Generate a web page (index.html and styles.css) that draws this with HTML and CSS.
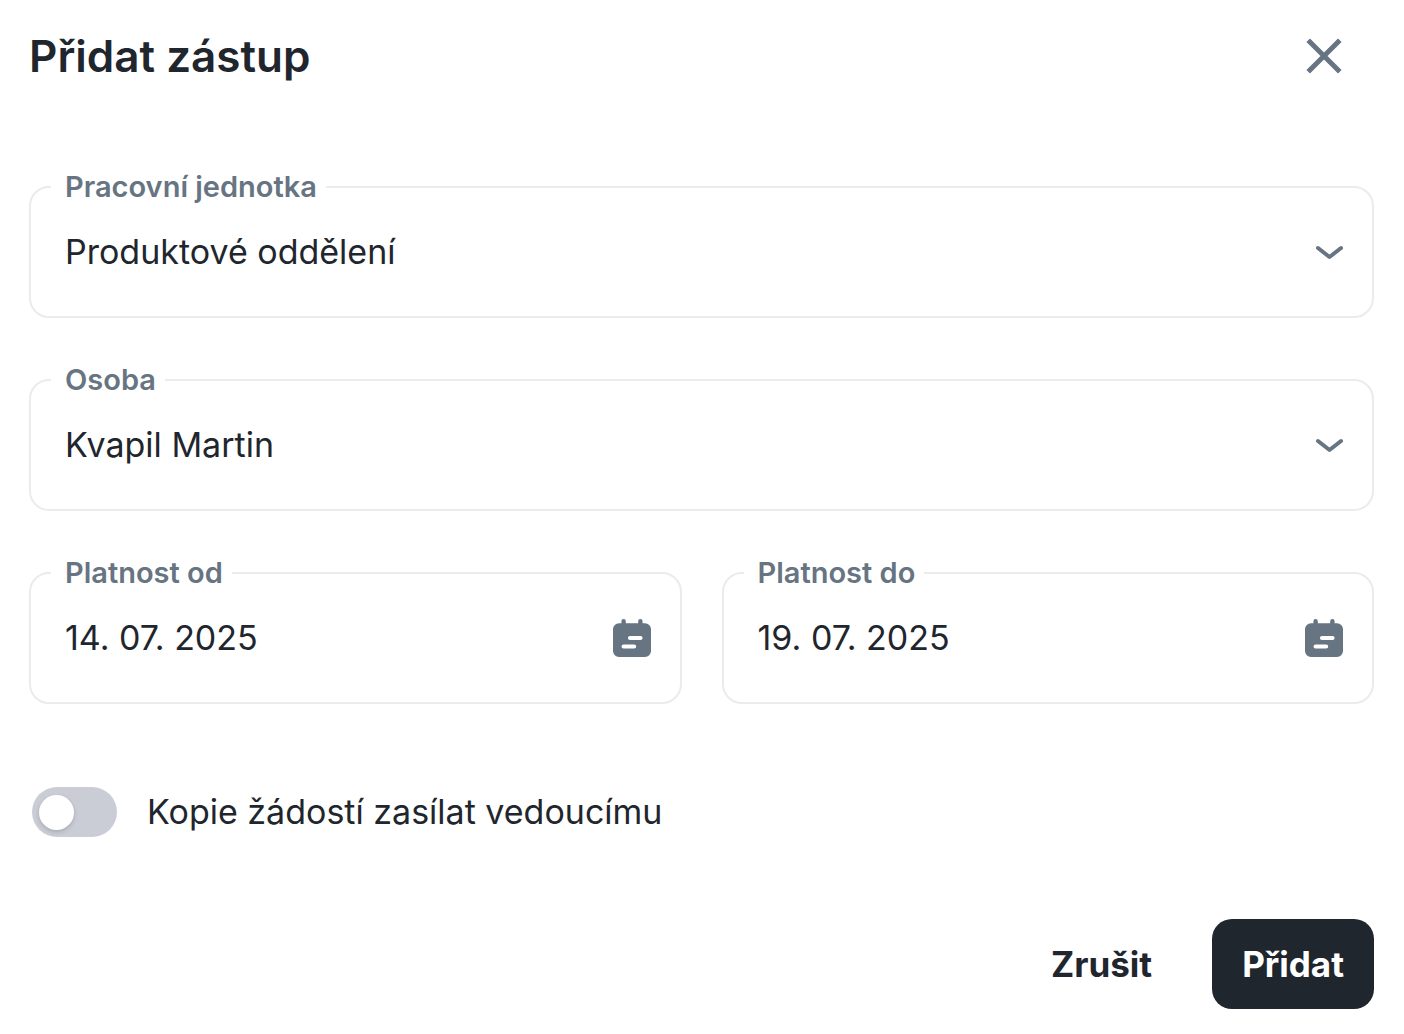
FILE: index.html
```html
<!DOCTYPE html>
<html lang="cs">
<head>
<meta charset="utf-8">
<meta name="viewport" content="width=device-width, initial-scale=1">
<title>Přidat zástup</title>
<link rel="stylesheet" href="styles.css">
</head>
<body>
<main class="dialog">
  <header class="dialog-header">
    <h1 class="dialog-title">Přidat zástup</h1>
    <button class="icon-button close-button" type="button" aria-label="Zavřít">
      <svg width="36" height="36" viewBox="0 0 36 36" fill="none" stroke="currentColor" stroke-width="5" aria-hidden="true"><path d="M2.200 2.200 33.800 33.800M33.800 2.200 2.200 33.800"/></svg>
    </button>
  </header>
  <form class="dialog-form">
    <div class="fields">
      <div class="field field-wide">
        <label class="field-label" for="unit">Pracovní jednotka</label>
        <select class="field-control" id="unit"><option>Produktové oddělení</option></select>
        <svg class="chevron" width="28" height="16" viewBox="0 0 28 16" fill="none" stroke="currentColor" stroke-width="4" stroke-linecap="round" stroke-linejoin="round" aria-hidden="true"><path d="M3 4 14.500 13 26 4"/></svg>
      </div>
      <div class="field field-wide">
        <label class="field-label" for="person">Osoba</label>
        <select class="field-control" id="person"><option>Kvapil Martin</option></select>
        <svg class="chevron" width="28" height="16" viewBox="0 0 28 16" fill="none" stroke="currentColor" stroke-width="4" stroke-linecap="round" stroke-linejoin="round" aria-hidden="true"><path d="M3 4 14.500 13 26 4"/></svg>
      </div>
      <div class="field">
        <label class="field-label" for="from">Platnost od</label>
        <input class="field-control" id="from" type="text" value="14. 07. 2025">
        <button class="icon-button" type="button" aria-label="Vybrat datum od">
          <svg width="38" height="38" viewBox="0 0 38 38" aria-hidden="true"><path fill="currentColor" d="M10.600 0a2.200 2.200 0 0 1 2.200 2.200v2h12.400v-2a2.200 2.200 0 0 1 4.400 0v2H32a6 6 0 0 1 6 6V32a6 6 0 0 1-6 6H6a6 6 0 0 1-6-6V10.200a6 6 0 0 1 6-6h2.400v-2A2.200 2.200 0 0 1 10.600 0Z"/><path stroke="#fff" stroke-width="4.200" stroke-linecap="round" d="M17 19h10.500M10.600 27.500h10.500"/></svg>
        </button>
      </div>
      <div class="field">
        <label class="field-label" for="to">Platnost do</label>
        <input class="field-control" id="to" type="text" value="19. 07. 2025">
        <button class="icon-button" type="button" aria-label="Vybrat datum do">
          <svg width="38" height="38" viewBox="0 0 38 38" aria-hidden="true"><path fill="currentColor" d="M10.600 0a2.200 2.200 0 0 1 2.200 2.200v2h12.400v-2a2.200 2.200 0 0 1 4.400 0v2H32a6 6 0 0 1 6 6V32a6 6 0 0 1-6 6H6a6 6 0 0 1-6-6V10.200a6 6 0 0 1 6-6h2.400v-2A2.200 2.200 0 0 1 10.600 0Z"/><path stroke="#fff" stroke-width="4.200" stroke-linecap="round" d="M17 19h10.500M10.600 27.500h10.500"/></svg>
        </button>
      </div>
    </div>
    <div class="switch-row">
      <input class="switch" id="copy" type="checkbox" role="switch">
      <label for="copy">Kopie žádostí zasílat vedoucímu</label>
    </div>
    <footer class="actions">
      <button class="button" type="button">Zrušit</button>
      <button class="button button-primary" type="submit">Přidat</button>
    </footer>
  </form>
</main>
</body>
</html>
```
FILE: styles.css
```css
* {
  box-sizing: border-box;
}

body {
  margin: 0;
  background: #fff;
  color: #1f262e;
  font: 400 34px/44px Inter, "Liberation Sans", sans-serif;
}

.dialog {
  padding: 26px 30px 25px 29px;
}

.dialog-header {
  display: flex;
  align-items: center;
  justify-content: space-between;
  padding-right: 32px;
}

.dialog-title {
  margin: 0;
  font-size: 44px;
  font-weight: 600;
  line-height: 60px;
}

.icon-button {
  display: flex;
  padding: 0;
  border: 0;
  background: none;
  color: #677482;
  cursor: pointer;
}

.dialog-form {
  margin-top: 100px;
}

.fields {
  display: grid;
  grid-template-columns: 1fr 1fr;
  gap: 61px 40px;
}

.field {
  position: relative;
  display: flex;
  align-items: center;
  min-height: 132px;
  padding-right: 29px;
  border: 2px solid #ebebeb;
  border-radius: 20px;
  color: #677482;
}

.field-wide {
  grid-column: 1 / -1;
}

.field-label {
  position: absolute;
  top: -21px;
  left: 20px;
  padding: 0 9px 0 14px;
  background: #fff;
  font-size: 29px;
  font-weight: 600;
  line-height: 40px;
}

.field-control {
  flex: 1;
  align-self: stretch;
  min-width: 0;
  padding: 0 0 0 34px;
  border: 0;
  border-radius: 20px;
  outline: 0;
  background: none;
  color: #1f262e;
  font: inherit;
  appearance: none;
}

.chevron {
  pointer-events: none;
}

.switch-row {
  display: flex;
  align-items: center;
  gap: 30px;
  margin-top: 83px;
  padding-left: 3px;
}

.switch {
  display: flex;
  align-items: center;
  width: 85px;
  height: 50px;
  margin: 0;
  padding: 0 7px;
  border-radius: 25px;
  background: #cacdd5;
  appearance: none;
  cursor: pointer;
}

.switch::before {
  width: 35px;
  height: 35px;
  border-radius: 50%;
  background: #fff;
  box-shadow: 0 2px 4px rgba(31, 38, 46, 0.2);
  content: "";
}

.switch:checked {
  justify-content: flex-end;
  background: #1f262e;
}

.actions {
  display: flex;
  justify-content: flex-end;
  gap: 30px;
  margin-top: 82px;
}

.button {
  height: 90px;
  padding: 0 30px;
  border: 0;
  border-radius: 20px;
  background: none;
  color: #1f262e;
  font: inherit;
  font-size: 35px;
  font-weight: 700;
  cursor: pointer;
}

.button-primary {
  background: #1f262e;
  color: #fff;
}
```
